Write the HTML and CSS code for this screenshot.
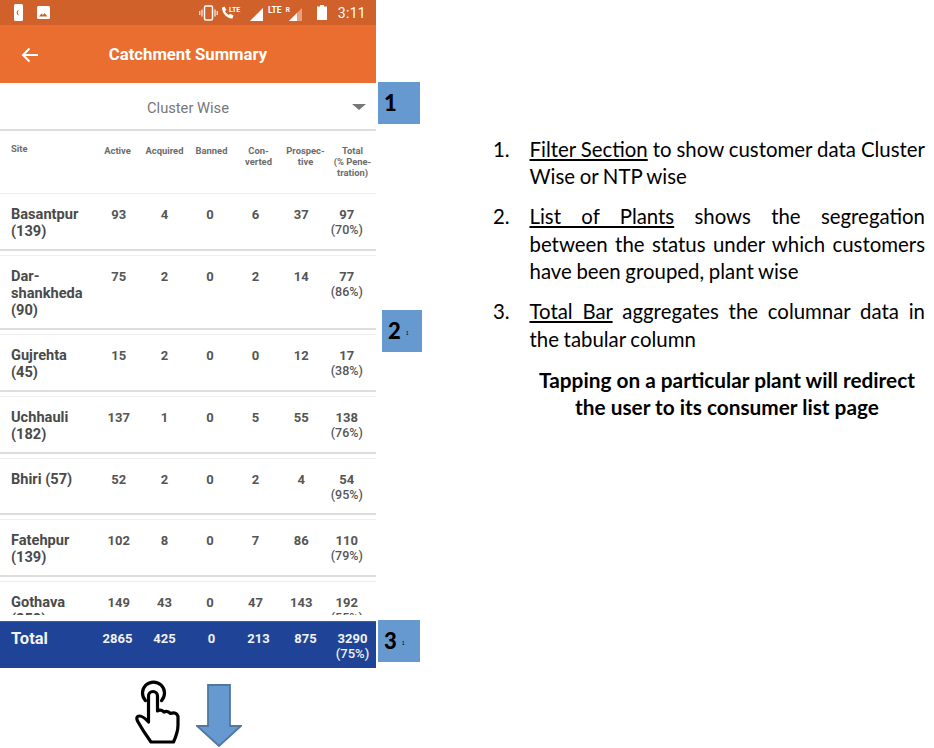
FILE: index.html
```html
<!DOCTYPE html>
<html lang="en">
<head>
  <meta charset="UTF-8" />
  <meta name="viewport" content="width=device-width, initial-scale=1.0" />
  <title>Catchment Summary</title>
  <link rel="stylesheet" href="styles.css">
</head>
<body>
  <div class="page">
    <div class="left">
      <div class="phone">
        <div class="status-bar">
          <svg class="st-left" width="40" height="18" viewBox="0 0 40 18">
            <rect x="1" y="0" width="9" height="17" rx="1.5" fill="#fff"/>
            <path d="M6.500 5.500a3.500 3.500 0 0 0 0 6 3.500 3.500 0 0 1-3-3 3.500 3.500 0 0 1 3-3z" fill="#d0612a"/>
            <rect x="24" y="2" width="13" height="13" rx="1.5" fill="#fff"/>
            <path d="M26 12.500l2.500-3 1.500 1.500 1.500-2 3 3.500z" fill="#d0612a"/>
          </svg>
          <div class="st-right">
            <svg width="19" height="16" viewBox="0 0 19 16" fill="none" stroke="#fff">
              <rect x="5.500" y="1" width="8" height="14" rx="1.500" stroke-width="1.500"/>
              <path d="M3 4.500v7M.8 6v4M16 4.500v7M18.200 6v4" stroke-width="1.100"/>
            </svg>
            <svg class="st-call" width="20" height="16" viewBox="0 0 20 16">
              <path d="M1 2.500l2.500-1 1.800 3.500-1.300 1.300a8 8 0 0 0 3.800 3.800l1.300-1.300 3.400 1.800-1 2.900C6.500 14 1 8.500 1 2.500z" fill="#fff"/>
              <text x="8" y="6.500" class="st-tiny">LTE</text>
            </svg>
            <svg class="st-signal" width="13" height="13" viewBox="0 0 13 13"><path d="M0 13L13 0v13z" fill="#fff"/></svg>
            <span class="st-lte">LTE</span>
            <span class="st-r">R</span>
            <svg class="st-signal2" width="13" height="13" viewBox="0 0 13 13">
              <path d="M0 13L13 0v13z" fill="#e9a27d"/>
              <path d="M0 13L8 5v8z" fill="#fff"/>
            </svg>
            <svg class="st-batt" width="10" height="15" viewBox="0 0 10 15">
              <path d="M3 0h4v1.500h3V15H0V1.500h3z" fill="#fff"/>
            </svg>
            <span class="st-time">3:11</span>
          </div>
        </div>

        <header class="app-bar">
          <svg class="back" width="18" height="16" viewBox="0 0 18 16" fill="none" stroke="#fff" stroke-width="2">
            <path d="M17 8H2M8.500 1.500L2 8l6.500 6.500"/>
          </svg>
          <h1>Catchment Summary</h1>
        </header>

        <div class="filter">
          <span>Cluster Wise</span>
          <i class="caret"></i>
        </div>

        <div class="head-row">
          <div class="site-head">Site</div>
          <div>Active</div>
          <div>Acquired</div>
          <div>Banned</div>
          <div>Con-<br>verted</div>
          <div>Prospec-<br>tive</div>
          <div>Total<br>(% Pene-<br>tration)</div>
        </div>

        <div class="rows">
          <div class="row">
            <div class="site">Basantpur (139)</div>
            <div>93</div><div>4</div><div>0</div><div>6</div><div>37</div>
            <div>97<br><span class="pct">(70%)</span></div>
          </div>
          <div class="row">
            <div class="site">Dar-<br>shankheda (90)</div>
            <div>75</div><div>2</div><div>0</div><div>2</div><div>14</div>
            <div>77<br><span class="pct">(86%)</span></div>
          </div>
          <div class="row">
            <div class="site">Gujrehta (45)</div>
            <div>15</div><div>2</div><div>0</div><div>0</div><div>12</div>
            <div>17<br><span class="pct">(38%)</span></div>
          </div>
          <div class="row">
            <div class="site">Uchhauli (182)</div>
            <div>137</div><div>1</div><div>0</div><div>5</div><div>55</div>
            <div>138<br><span class="pct">(76%)</span></div>
          </div>
          <div class="row">
            <div class="site">Bhiri (57)</div>
            <div>52</div><div>2</div><div>0</div><div>2</div><div>4</div>
            <div>54<br><span class="pct">(95%)</span></div>
          </div>
          <div class="row">
            <div class="site">Fatehpur (139)</div>
            <div>102</div><div>8</div><div>0</div><div>7</div><div>86</div>
            <div>110<br><span class="pct">(79%)</span></div>
          </div>
          <div class="row">
            <div class="site">Gothava (350)</div>
            <div>149</div><div>43</div><div>0</div><div>47</div><div>143</div>
            <div>192<br><span class="pct">(55%)</span></div>
          </div>
        </div>

        <div class="total-row">
          <div class="total-label">Total</div>
          <div>2865</div><div>425</div><div>0</div><div>213</div><div>875</div>
          <div>3290<br><span class="pct">(75%)</span></div>
        </div>

        <div class="callout c1"><b>1</b></div>
        <div class="callout c2"><b>2</b><small>1</small></div>
        <div class="callout c3"><b>3</b><small>1</small></div>
      </div>

      <div class="gesture">
        <svg width="46" height="67" viewBox="0 0 46 67" fill="#fff" stroke="#000" stroke-width="3.200" stroke-linejoin="round" stroke-linecap="round">
          <path d="M10.500 21.600A11 11 0 1 1 26.500 21.600" fill="none"/>
          <path d="M13.500 43V17a4.500 4.500 0 0 1 9 0v15q3-2 6.500 1 3.500-2 6.500 1.500 6-2 7.500 3V46q0 7-4.500 17H16Q8 52 2.500 42 .5 37 4.500 37 8 37 13.500 43z"/>
        </svg>
        <svg width="46" height="63" viewBox="0 0 46 63">
          <path d="M12 1h22v41h11L23 62 1 42h11z" fill="#6699cf" stroke="#50779f" stroke-width="1.800"/>
        </svg>
      </div>
    </div>

    <aside class="notes">
      <ol>
        <li><span><u>Filter Section</u> to show customer data Cluster Wise or NTP wise</span></li>
        <li><span><u>List of Plants</u> shows the segregation between the status under which customers have been grouped, plant wise</span></li>
        <li><span><u>Total Bar</u> aggregates the columnar data in the tabular column</span></li>
      </ol>
      <p>Tapping on a particular plant will redirect<br>the user to its consumer list page</p>
    </aside>
  </div>
</body>
</html>
```

FILE: styles.css
```css
body {
  margin: 0;
  background: #fff;
  font-family: Roboto, 'Liberation Sans', sans-serif;
}

.page {
  display: flex;
  width: 934px;
  height: 748px;
  overflow: hidden;
}

.left {
  width: 376px;
  flex: none;
}

.phone {
  position: relative;
}

/* status bar */
.status-bar {
  height: 25px;
  background: #d0612a;
  display: flex;
  align-items: center;
  justify-content: space-between;
  padding: 0 10px 0 13px;
  color: #fff;
}

.st-right {
  display: flex;
  align-items: center;
}

.st-call {
  margin-left: 3px;
}

.st-tiny {
  font-size: 7px;
  font-weight: 700;
  fill: #fff;
}

.st-signal {
  margin-left: 9px;
  margin-top: 3px;
}

.st-lte {
  font-size: 8.500px;
  font-weight: 700;
  margin-left: 5px;
  margin-top: -6px;
}

.st-r {
  font-size: 6.500px;
  font-weight: 700;
  margin-left: 4px;
  margin-top: -5px;
}

.st-signal2 {
  margin-left: -1px;
  margin-top: 3px;
}

.st-batt {
  margin-left: 15px;
}

.st-time {
  font-size: 14px;
  margin-left: 11px;
  letter-spacing: 0.300px;
}

/* app bar */
.app-bar {
  height: 58px;
  box-sizing: border-box;
  padding-top: 1px;
  background: #e96e30;
  display: flex;
  align-items: center;
  justify-content: center;
  position: relative;
}

.app-bar h1 {
  margin: 0;
  font-size: 16.700px;
  font-weight: 700;
  color: #fff;
}

.back {
  position: absolute;
  left: 21px;
  top: 22px;
}

/* filter */
.filter {
  box-sizing: border-box;
  height: 48px;
  padding-top: 4px;
  border-bottom: 2px solid #ddd;
  display: flex;
  align-items: center;
  justify-content: center;
  position: relative;
  font-size: 14.700px;
  color: #777;
}

.caret {
  position: absolute;
  right: 10px;
  top: 21px;
  border-left: 7px solid transparent;
  border-right: 7px solid transparent;
  border-top: 6px solid #777;
}

/* table */
.head-row,
.total-row {
  display: grid;
  grid-template-columns: 94px repeat(6, 47px);
  text-align: center;
}

.head-row {
  height: 48px;
  font-size: 9.400px;
  font-weight: 700;
  line-height: 11px;
  color: #6c6c6c;
  padding-top: 14px;
}

.site-head {
  text-align: left;
  padding-left: 11px;
  margin-top: -2px;
}

.rows {
  height: 422px;
  margin-bottom: 6px;
  overflow: hidden;
}

.row {
  display: grid;
  grid-template-columns: 96px repeat(6, 45.600px);
  min-height: 57.900px;
  box-sizing: border-box;
  margin-bottom: 4px;
  padding: 11px 0 8.900px;
  border-top: 1px solid #eee;
  border-bottom: 2px solid #ddd;
  text-align: center;
  font-size: 13px;
  font-weight: 700;
  line-height: 15px;
  color: #555;
}

.row > div {
  padding-top: 2px;
}

.row > .site {
  padding-top: 1px;
}

.site {
  text-align: left;
  padding-left: 11px;
  width: 76px;
  font-size: 14.600px;
  line-height: 17px;
  color: #4a4a4a;
}

.pct {
  font-size: 12.500px;
  font-weight: 500;
}

.total-row {
  height: 47px;
  box-sizing: border-box;
  background: #1f4497;
  border-top: 1px solid #3a5ea8;
  padding-top: 9px;
  font-size: 13px;
  font-weight: 700;
  line-height: 15px;
  color: #f2f2f2;
}

.total-row .pct {
  font-size: 13px;
}

.total-label {
  text-align: left;
  padding-left: 11px;
  font-size: 16.500px;
}

/* numbered boxes beside the phone */
.callout {
  position: absolute;
  width: 42px;
  height: 42px;
  background: #6699cf;
  color: #000;
  font-family: Lato, sans-serif;
  font-size: 22px;
  line-height: 41px;
  box-sizing: border-box;
  padding-left: 6px;
}

.callout b {
  font-weight: 900;
}

.callout small {
  font-size: 5px;
  margin-left: 5px;
  vertical-align: middle;
}

.c1 { left: 378px; top: 82px; }
.c2 { left: 382px; top: 310px; width: 40px; }
.c3 { left: 378px; top: 620px; }

/* hand + arrow under the phone */
.gesture {
  display: flex;
  align-items: flex-start;
  gap: 15px;
  padding: 11px 0 0 135px;
}

.gesture svg:last-child {
  margin-top: 5px;
}

/* notes on the right */
.notes {
  margin-left: 117px;
  width: 432px;
  padding-top: 135.500px;
  font-family: Lato, sans-serif;
  font-size: 20.400px;
  word-spacing: -0.600px;
  line-height: 27.500px;
  color: #000;
}

.notes ol {
  margin: 0;
  padding: 0;
  list-style: none;
  counter-reset: note;
}

.notes li {
  display: flex;
  margin-bottom: 12.500px;
  counter-increment: note;
}

.notes li::before {
  content: counter(note) ".";
  flex: 0 0 36.500px;
}

.notes li span {
  flex: 1;
  text-align: justify;
}

.notes p {
  margin: 0;
  padding-left: 36px;
  font-size: 20.800px;
  word-spacing: 0;
  font-weight: 700;
  text-align: center;
}
```
